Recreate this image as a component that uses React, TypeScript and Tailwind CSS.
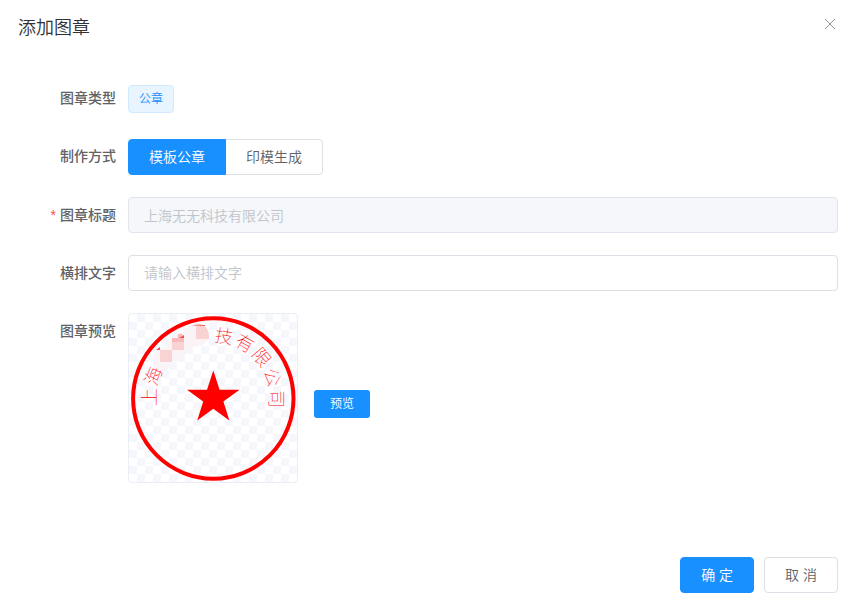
import { useId, useState } from "react";
import type { ReactNode } from "react";

const sealChars = [
  { char: "上", x: 149, y: 397, angle: -90 },
  { char: "海", x: 153, y: 376, angle: -70 },
  { char: "技", x: 224, y: 336, angle: 10 },
  { char: "有", x: 245, y: 343, angle: 30 },
  { char: "限", x: 262, y: 357, angle: 50 },
  { char: "公", x: 273, y: 377, angle: 70 },
  { char: "司", x: 277, y: 399, angle: 90 },
];

function Seal() {
  const pattern = useId();
  return (
    <svg viewBox="129 314 168 168" className="block h-full w-full" role="img" aria-label="图章预览">
      <defs>
        <pattern id={pattern} x="129" y="314" width="16" height="16" patternUnits="userSpaceOnUse">
          <rect width="8" height="8" x="8" fill="#f5f7fc" />
          <rect width="8" height="8" y="8" fill="#f5f7fc" />
        </pattern>
      </defs>
      <rect x="129" y="314" width="168" height="168" fill={`url(#${pattern})`} />
      <path d="M153 370V359Q155 347 168 346Q170 334 182 333Q188 323 201 324Q210 328 209 338Q205 347 192 347L184 355Q178 362 171 362L167 371Z" fill="#faf4f6" />
      <path d="M160 350H172V362H160ZM172 338H184V350H172ZM196 339V326H204Q209 328 209 339Z" fill="#f9d2d4" />
      <path d="M172 338H178Q176 333 182 334L184 338V342H172ZM191 326Q199 322 205 326Z" fill="#f9b9bb" />
      <path d="M156 350L160 347V350ZM179 338L184 335V338ZM193 326L205 325V326Z" fill="#f05050" />
      <circle cx="213.300" cy="398.500" r="80.200" fill="none" stroke="#f00" strokeWidth="4" />
      <path d="M213.300 370.500L219.600 389.700H239.600L223.400 401.500L229.400 420.500L213.300 408.800L197.200 420.500L203.200 401.500L187 389.700H207Z" fill="#f00" />
      {sealChars.map(({ char, x, y, angle }) => (
        <text
          key={char}
          x="0"
          y="7"
          textAnchor="middle"
          fontSize="18"
          fontWeight="100"
          fill="#f00"
          transform={`translate(${x} ${y}) rotate(${angle})`}
        >
          {char}
        </text>
      ))}
    </svg>
  );
}

const labelClass = "h-9 w-28 shrink-0 pr-3 text-right text-sm leading-9 font-medium text-[#606266]";
const inputClass =
  "h-9 min-w-0 flex-1 rounded border border-[#dcdfe6] bg-white px-[15px] text-sm text-[#606266] outline-none placeholder:text-[#c0c4cc] focus:border-[#1890ff] disabled:border-[#dfe4ed] disabled:bg-[#f5f7fa] disabled:text-[#c0c4cc]";

function Row({ label, children }: { label: string; children: ReactNode }) {
  return (
    <div className="flex">
      <span className={labelClass}>{label}</span>
      {children}
    </div>
  );
}

export default function App() {
  const [mode, setMode] = useState("template");
  const base = "h-9 border px-5 text-sm";
  const on = "relative border-[#1890ff] bg-[#1890ff] text-white";
  const off = "border-[#dcdfe6] bg-white text-[#606266]";
  return (
    <main className="bg-white px-4 pb-3.5 font-['Liberation_Sans','Noto_Sans_CJK_SC',sans-serif] font-[350]">
      <header className="flex h-20 items-start justify-between pt-4 pl-0.5">
        <h1 className="text-lg leading-6 text-[#303133]">添加图章</h1>
        <button type="button" aria-label="关闭" className="flex h-4 w-4 items-center justify-center text-[#909399]">
          <svg viewBox="0 0 16 16" className="h-4 w-4" fill="none" stroke="currentColor" strokeWidth="1">
            <path d="M3 3L13 13M13 3L3 13" />
          </svg>
        </button>
      </header>
      <form className="flex flex-col gap-[22px]" onSubmit={(e) => e.preventDefault()}>
        <Row label="图章类型">
          <span className="mt-[5px] h-7 rounded border border-[#d1e9ff] bg-[#e8f4ff] px-2.5 text-xs leading-[26px] text-[#1890ff]">公章</span>
        </Row>
        <Row label="制作方式">
          <div className="flex pt-px">
            <button type="button" aria-pressed={mode === "template"} onClick={() => setMode("template")} className={`${base} rounded-l ${mode === "template" ? on : off}`}>模板公章</button>
            <button type="button" aria-pressed={mode === "mould"} onClick={() => setMode("mould")} className={`${base} -ml-px rounded-r ${mode === "mould" ? on : off}`}>印模生成</button>
          </div>
        </Row>
        <div className="flex">
          <label htmlFor="title" className={labelClass}>
            <span className="mr-1 font-normal text-[#ff4949]">*</span>图章标题
          </label>
          <input id="title" disabled value="上海无无科技有限公司" className={inputClass} />
        </div>
        <div className="flex">
          <label htmlFor="horizontal" className={labelClass}>横排文字</label>
          <input id="horizontal" placeholder="请输入横排文字" className={inputClass} />
        </div>
        <Row label="图章预览">
          <div className="flex items-center gap-4">
            <div className="h-[170px] w-[170px] overflow-hidden rounded border border-[#ebeef5] font-['Noto_Sans_CJK_SC',sans-serif]">
              <Seal />
            </div>
            <button type="button" className="mt-3 h-7 rounded-[3px] bg-[#1890ff] px-4 text-xs text-white">预览</button>
          </div>
        </Row>
      </form>
      <footer className="mt-[74px] flex justify-end gap-2.5">
        <button type="button" className="h-9 rounded border border-[#1890ff] bg-[#1890ff] px-5 text-sm text-white">确 定</button>
        <button type="button" className="h-9 rounded border border-[#dcdfe6] bg-white px-5 text-sm text-[#606266]">取 消</button>
      </footer>
    </main>
  );
}
